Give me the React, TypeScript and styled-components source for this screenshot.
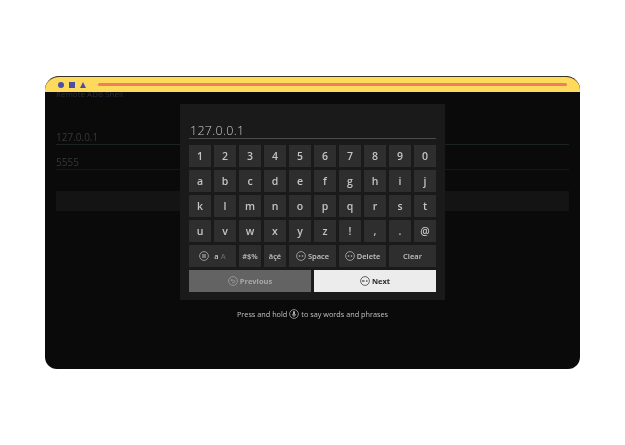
import React, { FC } from 'react'
import styled, { createGlobalStyle } from 'styled-components'

const GlobalStyle = createGlobalStyle`
html, body {
  margin: 0;
  padding: 0;
  background: #fff;
  font-family: "Open Sans", "Liberation Sans", sans-serif;
}
`

const Page = styled.div`
width: 625px;
height: 445px;
padding: 76px 45px 76px;
box-sizing: border-box;
`

const Window = styled.div`
position: relative;
height: 293px;
box-sizing: border-box;
background: #0a0a0a;
border-top: 1px solid #3a3320;
border-radius: 14px 14px 12px 12px;
overflow: hidden;
`

const TitleBar = styled.div`
position: relative;
z-index: 1;
display: flex;
align-items: center;
height: 15px;
padding: 0 13px 0 13px;
box-sizing: border-box;
background: #fdd95c;
`

const Shapes = styled.svg`
width: 28px;
height: 8px;
flex: none;
margin-right: 12px;
`

const TitleLine = styled.div`
flex: 1;
height: 3px;
border-radius: 2px;
background: #ee7d62;
`

const Backdrop = styled.div`
display: flex;
flex-direction: column;
padding: 0 11px;
margin-top: -3px;
filter: blur(0.4px);
`

const BackTitle = styled.div`
height: 14px;
font-size: 8px;
line-height: 9px;
color: #2c2c38;
`

const Field = styled.div<{ $top: number; $bright?: boolean }>`
height: 24px;
box-sizing: border-box;
padding-top: 9px;
margin-top: ${(p) => p.$top}px;
border-bottom: 1px solid ${(p) => (p.$bright ? '#1a2321' : '#141817')};
font-size: 10px;
line-height: 14px;
color: #383838;
`

const BackButton = styled.div`
height: 20px;
margin-top: 21px;
background: #141414;
`

const Overlay = styled.div`
position: absolute;
top: 27px;
left: 135px;
width: 265px;
display: flex;
flex-direction: column;
align-items: center;
`

const Panel = styled.div`
width: 265px;
height: 196px;
box-sizing: border-box;
padding: 18px 9px 0;
background: #1a1a1a;
`

const BlurredContent = styled.div`
filter: blur(0.35px);
`

const InputText = styled.div`
height: 16px;
padding-left: 1px;
border-bottom: 1px solid #4c4c4c;
font-size: 12.5px;
font-weight: 300;
line-height: 17px;
letter-spacing: 0.3px;
color: #c8c8c8;
margin-bottom: 6px;
`

const KeyRow = styled.div`
display: flex;
gap: 3px;
margin-bottom: 3px;
`

const Key = styled.div<{ $wide?: number }>`
width: ${(p) => p.$wide || 22}px;
height: 22px;
flex: none;
display: flex;
align-items: center;
justify-content: center;
gap: 2px;
background: #2e2e2e;
color: #c4c4c4;
font-size: ${(p) => (p.$wide ? 7.5 : 10.5)}px;
font-weight: 600;
`

const ActionRow = styled.div`
display: flex;
gap: 3px;
`

const ActionButton = styled.div<{ $active?: boolean }>`
width: 122px;
height: 22px;
display: flex;
align-items: center;
justify-content: center;
gap: 2px;
background: ${(p) => (p.$active ? '#ececec' : '#636363')};
color: ${(p) => (p.$active ? '#2a2a2a' : '#a8a8a8')};
font-size: 7.5px;
font-weight: 700;
`

const Hint = styled.div`
display: flex;
align-items: center;
gap: 2px;
margin-top: 9px;
font-size: 7.3px;
line-height: 10px;
color: #c0c0c0;
white-space: nowrap;
filter: blur(0.25px);
`

const FadedLetter = styled.span`
color: #666;
`

const LeftGlyph = styled.span`
margin-right: 3px;
display: flex;
`

type IconKind = 'dots' | 'menu' | 'back' | 'next' | 'mic'

const ButtonIcon: FC<{ kind: IconKind }> = ({ kind }) => (
  <svg width="10" height="10" viewBox="0 0 10 10" fill="none" stroke="currentColor" strokeWidth="0.7">
    <circle cx="5" cy="5" r="4.4" />
    {kind === 'dots' && (
      <g fill="currentColor" stroke="none">
        <circle cx="3.5" cy="5" r="0.8" />
        <circle cx="6.5" cy="5" r="0.8" />
      </g>
    )}
    {kind === 'menu' && <path d="M3 3.8h4M3 5h4M3 6.2h4" />}
    {kind === 'back' && <path d="M3 4.2h2.6a1.2 1.2 0 0 1 0 2.4H4M3 4.2l1-1M3 4.2l1 1" />}
    {kind === 'next' && (
      <>
        <path d="M2.4 5h2.4M3.4 4l-1 1 1 1" />
        <circle cx="6.8" cy="5" r="0.8" fill="currentColor" stroke="none" />
      </>
    )}
    {kind === 'mic' && (
      <>
        <rect x="4.1" y="2" width="1.8" height="4" rx="0.9" fill="currentColor" stroke="none" />
        <path d="M3.2 5a1.8 1.8 0 0 0 3.6 0M5 6.9v1.1" />
      </>
    )}
  </svg>
)

const rows = [
  ['1', '2', '3', '4', '5', '6', '7', '8', '9', '0'],
  ['a', 'b', 'c', 'd', 'e', 'f', 'g', 'h', 'i', 'j'],
  ['k', 'l', 'm', 'n', 'o', 'p', 'q', 'r', 's', 't'],
  ['u', 'v', 'w', 'x', 'y', 'z', '!', ',', '.', '@'],
]

const App: FC = () => {
  return (
    <Page>
      <GlobalStyle />
      <Window>
        <TitleBar>
          <Shapes viewBox="0 0 28 8">
            <circle cx="3" cy="4" r="3" fill="#4b4fa8" />
            <rect x="11" y="1" width="6" height="6" fill="#4b4fa8" />
            <path d="M22 7l3-6 3 6z" fill="#4b4fa8" />
          </Shapes>
          <TitleLine />
        </TitleBar>

        <Backdrop>
          <BackTitle>Remote ADB Shell</BackTitle>
          <Field $top={18} $bright>127.0.0.1</Field>
          <Field $top={1}>5555</Field>
          <BackButton />
        </Backdrop>

        <Overlay>
          <Panel>
            <BlurredContent>
              <InputText>127.0.0.1</InputText>
              {rows.map((row) => (
                <KeyRow key={row[0]}>
                  {row.map((k) => (
                    <Key key={k}>{k}</Key>
                  ))}
                </KeyRow>
              ))}
              <KeyRow>
                <Key $wide={47}>
                  <LeftGlyph><ButtonIcon kind="menu" /></LeftGlyph>a<FadedLetter>A</FadedLetter>
                </Key>
                <Key $wide={22}>#$%</Key>
                <Key $wide={22}>äçé</Key>
                <Key $wide={47}><ButtonIcon kind="dots" />Space</Key>
                <Key $wide={47}><ButtonIcon kind="dots" />Delete</Key>
                <Key $wide={47}>Clear</Key>
              </KeyRow>
              <ActionRow>
                <ActionButton><ButtonIcon kind="back" />Previous</ActionButton>
                <ActionButton $active><ButtonIcon kind="next" />Next</ActionButton>
              </ActionRow>
            </BlurredContent>
          </Panel>
          <Hint>
            Press and hold <ButtonIcon kind="mic" /> to say words and phrases
          </Hint>
        </Overlay>
      </Window>
    </Page>
  )
}

export default App
